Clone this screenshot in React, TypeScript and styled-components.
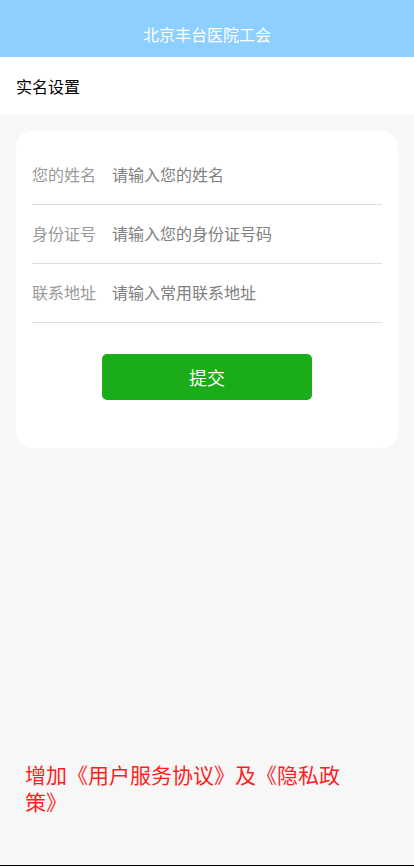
import React from "react";
import styled, { createGlobalStyle } from "styled-components";

const GlobalStyle = createGlobalStyle`
  html, body {
    margin: 0;
    padding: 0;
    background: #f7f7f7;
    font-family: "Noto Sans CJK SC", "Noto Sans", sans-serif;
  }
  * {
    box-sizing: border-box;
  }
`;

const Page = styled.div`
  display: flex;
  flex-direction: column;
  min-height: 866px;
  background: #f7f7f7;
  border-bottom: 1px solid #000;
`;

const TopBar = styled.header`
  height: 57px;
  background: #8dcfff;
  color: #fff;
  font-size: 16px;
  display: flex;
  align-items: center;
  justify-content: center;
  padding-top: 10px;
`;

const SubBar = styled.div`
  height: 58px;
  background: #fff;
  color: #000;
  font-size: 16px;
  display: flex;
  align-items: center;
  padding: 0 16px;
`;

const Card = styled.div`
  margin: 16px 16px 0;
  background: #fff;
  border-radius: 16px;
  padding: 15px 16px 48px;
`;

const FieldRow = styled.label`
  height: 59px;
  display: flex;
  align-items: center;
  padding-bottom: 2px;
  border-bottom: 1px solid #dedede;
`;

const FieldLabel = styled.span`
  width: 80px;
  flex-shrink: 0;
  font-size: 16px;
  color: #999;
`;

const FieldInput = styled.input`
  flex: 1;
  min-width: 0;
  border: none;
  outline: none;
  background: transparent;
  padding: 0;
  font-family: inherit;
  font-size: 16px;
  color: #333;
  &::placeholder {
    color: #808080;
  }
`;

const SubmitButton = styled.button`
  display: block;
  width: 210px;
  height: 46px;
  margin: 31px auto 0;
  border: none;
  border-radius: 5px;
  background: #1aad19;
  color: #fff;
  font-family: inherit;
  font-size: 18px;
`;

const Notice = styled.p`
  margin: auto 0 0;
  padding: 0 25px 50px;
  width: 380px;
  color: #ff1e1e;
  font-size: 21px;
  line-height: 27px;
`;

const fields = [
  { label: "您的姓名", placeholder: "请输入您的姓名" },
  { label: "身份证号", placeholder: "请输入您的身份证号码" },
  { label: "联系地址", placeholder: "请输入常用联系地址" },
];

export default function App() {
  return (
    <Page>
      <GlobalStyle />
      <TopBar>北京丰台医院工会</TopBar>
      <SubBar>实名设置</SubBar>
      <Card>
        {fields.map((f) => (
          <FieldRow key={f.label}>
            <FieldLabel>{f.label}</FieldLabel>
            <FieldInput placeholder={f.placeholder} />
          </FieldRow>
        ))}
        <SubmitButton>提交</SubmitButton>
      </Card>
      <Notice>增加《用户服务协议》及《隐私政策》</Notice>
    </Page>
  );
}
